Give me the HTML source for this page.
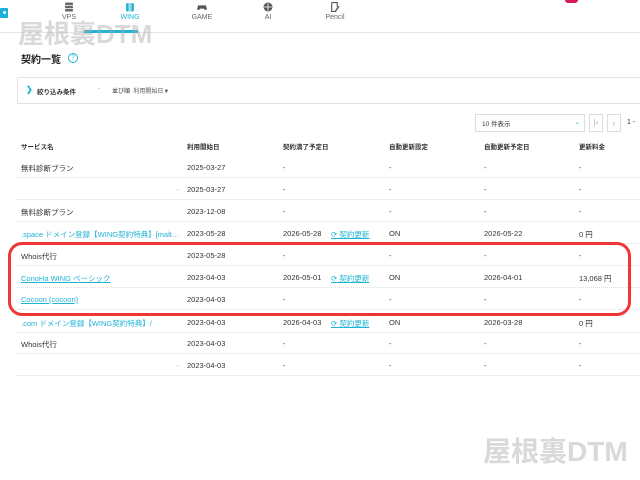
<!DOCTYPE html>
<html><head><meta charset="utf-8"><style>
*{margin:0;padding:0;box-sizing:border-box}
body{width:640px;height:480px;overflow:hidden;background:#fff;font-family:"Liberation Sans","Noto Sans CJK JP",sans-serif;color:#333;position:relative;font-size:7px}
.a{position:absolute;white-space:nowrap}
.nav{position:absolute;left:0;top:0;width:640px;height:33px;border-bottom:1px solid #e6e6e6}
.ni{position:absolute;top:2px;width:40px;text-align:center;font-size:7px;color:#666}
.ni .ic{display:block;margin:0 auto 2px;width:10px;height:10px}
.link{color:#1fb3d6;text-decoration:underline}
.lt{color:#1fb3d6}
.row{position:absolute;left:17px;width:623px;height:22px;border-bottom:1px dotted #ddd;font-size:7.5px}
.row span{position:absolute;top:7px;white-space:nowrap}
.h{font-size:6.5px;color:#333;font-weight:bold}
</style></head><body>
<div class="nav">
 <div class="a" style="left:0;top:8px;width:8px;height:10px;background:#1ab0d9;border-radius:1px"></div>
 <div class="a" style="left:3px;top:11px;width:3px;height:3px;background:#fff;border-radius:50%"></div>
 <div class="ni" style="left:49px"><svg class="ic" viewBox="0 0 9 9"><rect x="1" y="0.5" width="7" height="2.2" fill="#666"/><rect x="1" y="3.4" width="7" height="2.2" fill="#666"/><rect x="1" y="6.3" width="7" height="2.2" fill="#666"/></svg>VPS</div>
 <div class="ni" style="left:110px;color:#1fb3d6"><svg class="ic" viewBox="0 0 9 9"><rect x="1" y="1" width="7" height="7.5" rx="1" fill="#1fb3d6"/><rect x="3" y="0" width="3" height="9" fill="#fff" opacity=".5"/></svg>WING</div>
 <div class="ni" style="left:182px"><svg class="ic" viewBox="0 0 9 9"><path d="M1 3h7l1 4-2 0-1-1H3L2 7H0z" fill="#555"/></svg>GAME</div>
 <div class="ni" style="left:248px"><svg class="ic" viewBox="0 0 9 9"><circle cx="4.5" cy="4.5" r="4" fill="#555"/><path d="M4.5 1v7M1 4.5h7" stroke="#fff" stroke-width=".7"/></svg>AI</div>
 <div class="ni" style="left:315px"><svg class="ic" viewBox="0 0 9 9"><path d="M1.5 .5h5v4M1.5 .5v8h4" stroke="#555" fill="none"/><path d="M5 8l3-4" stroke="#555" stroke-width="1.3"/></svg>Pencil</div>
 <div class="a" style="left:84px;top:30px;width:54px;height:3px;background:#1fb3d6"></div>
 <div class="a" style="left:565px;top:0;width:13px;height:3px;background:#d81b60;border-radius:0 0 3px 3px"></div>
</div>
<div class="a" style="left:18px;top:14px;font-size:26px;font-weight:bold;color:rgba(170,170,170,.45)">屋根裏DTM</div>
<div class="a" style="left:21px;top:51px;font-size:10px;font-weight:bold;color:#222">契約一覧</div>
<div class="a" style="left:68px;top:53px;width:10px;height:10px;border:1px solid #1fb3d6;border-radius:50%;font-size:6.5px;color:#1fb3d6;text-align:center;line-height:8px">?</div>
<div class="a" style="left:17px;top:77px;width:630px;height:27px;border:1px solid #e3e3e3"></div>
<div class="a" style="left:26px;top:85px;font-size:8px;color:#1fb3d6;font-weight:bold">&#x276F;</div>
<div class="a" style="left:37px;top:86px;font-size:6.5px;font-weight:bold">絞り込み条件</div>
<div class="a" style="left:98px;top:86px;font-size:6px;color:#999">-</div>
<div class="a" style="left:112px;top:86px;font-size:6px">並び順&nbsp;&nbsp;<span style="color:#555">利用開始日▼</span></div>
<div class="a" style="left:475px;top:114px;width:110px;height:18px;border:1px solid #ddd;font-size:6.5px;padding:3px 0 0 6px">10 件表示<span style="position:absolute;right:4px;top:3px;color:#1fb3d6">&#x2304;</span></div>
<div class="a" style="left:589px;top:114px;width:14px;height:18px;border:1px solid #ddd;color:#aaa;font-size:8px;text-align:center;line-height:16px">|&lsaquo;</div>
<div class="a" style="left:607px;top:114px;width:14px;height:18px;border:1px solid #ddd;color:#aaa;font-size:9px;text-align:center;line-height:16px">&lsaquo;</div>
<div class="a" style="left:627px;top:119px;font-size:7px">1 -</div>

<div class="row" style="top:134px;border:none"><span class="h" style="left:4px">サービス名</span><span class="h" style="left:170px">利用開始日</span><span class="h" style="left:266px">契約満了予定日</span><span class="h" style="left:372px">自動更新設定</span><span class="h" style="left:467px">自動更新予定日</span><span class="h" style="left:562px">更新料金</span></div>

<div class="row" style="top:156px"><span style="left:4px">無料診断プラン</span><span style="left:170px">2025-03-27</span><span style="left:266px">-</span><span style="left:372px">-</span><span style="left:467px">-</span><span style="left:562px">-</span></div>
<div class="row" style="top:178px"><span style="left:158px;color:#999">··</span><span style="left:170px">2025-03-27</span><span style="left:266px">-</span><span style="left:372px">-</span><span style="left:467px">-</span><span style="left:562px">-</span></div>
<div class="row" style="top:200px"><span style="left:4px">無料診断プラン</span><span style="left:170px">2023-12-08</span><span style="left:266px">-</span><span style="left:372px">-</span><span style="left:467px">-</span><span style="left:562px">-</span></div>
<div class="row" style="top:222px"><span class="lt" style="left:4px;width:161px;overflow:hidden;text-overflow:ellipsis">.space ドメイン登録【WING契約特典】[maltese-dtm.space]</span><span style="left:170px">2023-05-28</span><span style="left:266px">2026-05-28</span><span class="link" style="left:314px">⟳ 契約更新</span><span style="left:372px">ON</span><span style="left:467px">2026-05-22</span><span style="left:562px">0 円</span></div>
<div class="row" style="top:244px"><span style="left:4px">Whois代行</span><span style="left:170px">2023-05-28</span><span style="left:266px">-</span><span style="left:372px">-</span><span style="left:467px">-</span><span style="left:562px">-</span></div>
<div class="row" style="top:266px"><span class="link" style="left:4px">ConoHa WING ベーシック</span><span style="left:170px">2023-04-03</span><span style="left:266px">2026-05-01</span><span class="link" style="left:314px">⟳ 契約更新</span><span style="left:372px">ON</span><span style="left:467px">2026-04-01</span><span style="left:562px">13,068 円</span></div>
<div class="row" style="top:288px"><span class="link" style="left:4px">Cocoon (cocoon)</span><span style="left:170px">2023-04-03</span><span style="left:266px">-</span><span style="left:372px">-</span><span style="left:467px">-</span><span style="left:562px">-</span></div>
<div class="row" style="top:311px"><span class="lt" style="left:4px">.com ドメイン登録【WING契約特典】/</span><span style="left:170px">2023-04-03</span><span style="left:266px">2026-04-03</span><span class="link" style="left:314px">⟳ 契約更新</span><span style="left:372px">ON</span><span style="left:467px">2026-03-28</span><span style="left:562px">0 円</span></div>
<div class="row" style="top:332px"><span style="left:4px">Whois代行</span><span style="left:170px">2023-04-03</span><span style="left:266px">-</span><span style="left:372px">-</span><span style="left:467px">-</span><span style="left:562px">-</span></div>
<div class="row" style="top:354px"><span style="left:158px;color:#999">··</span><span style="left:170px">2023-04-03</span><span style="left:266px">-</span><span style="left:372px">-</span><span style="left:467px">-</span><span style="left:562px">-</span></div>

<div class="a" style="left:8px;top:242px;width:623px;height:74px;border:3px solid #f03535;border-radius:14px"></div>
<div class="a" style="left:483px;top:430px;font-size:28px;font-weight:bold;color:rgba(170,170,170,.45)">屋根裏DTM</div>
</body></html>
